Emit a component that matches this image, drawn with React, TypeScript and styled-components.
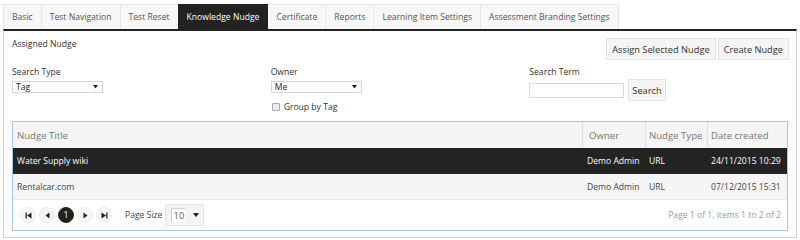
import React from 'react';
import styled, { createGlobalStyle } from 'styled-components';

const Global = createGlobalStyle`
  html, body { margin: 0; padding: 0; background: #fff; }
  body { font-family: "Open Sans", "Noto Sans", sans-serif; color: #333; }
  * { box-sizing: border-box; }
`;

const Page = styled.div`
  width: 800px;
  padding: 4px 3px 0 3px;
`;

const TabBar = styled.div`
  display: flex;
  height: 25px;
`;

const Tab = styled.div<{ $active?: boolean }>`
  display: flex;
  align-items: center;
  padding: 0 8px;
  margin-right: -1px;
  border: 1px solid ${p => (p.$active ? '#222' : '#e6e6e6')};
  border-bottom: none;
  background: ${p => (p.$active ? '#222' : '#f7f7f7')};
  color: ${p => (p.$active ? '#fff' : '#555')};
  font-size: 8.6px;
  white-space: nowrap;
  position: relative;
  z-index: ${p => (p.$active ? 1 : 0)};
`;

const Panel = styled.div`
  border: 1px solid #d0d0d0;
  border-top: 2px solid #222;
  padding: 7px 8px 6px 8px;
`;

const TopRow = styled.div`
  display: flex;
  justify-content: space-between;
  align-items: flex-start;
  height: 22px;
`;

const Heading = styled.div`
  font-size: 8.6px;
  color: #333;
  line-height: 13px;
`;

const ButtonGroup = styled.div`
  display: flex;
  gap: 2px;
  margin-right: -1px;
`;

const Button = styled.button<{ $compact?: boolean }>`
  height: 22px;
  padding: 0 ${p => (p.$compact ? 3 : 5)}px;
  border: 1px solid #e3e3e3;
  background: #f5f5f5;
  color: #333;
  font-family: "Open Sans", "Noto Sans", sans-serif;
  font-size: 9.25px;
  cursor: pointer;
  white-space: nowrap;
`;

const Filters = styled.div`
  display: grid;
  grid-template-columns: repeat(3, 1fr);
  align-items: start;
  margin-top: 6px;
`;

const Field = styled.div`
  display: flex;
  flex-direction: column;
  align-items: flex-start;
`;

const Label = styled.div`
  font-size: 8.6px;
  line-height: 13px;
  color: #333;
`;

const Select = styled.div`
  margin-top: 2px;
  width: 91px;
  height: 12px;
  border: 1px solid #d6d6d6;
  background: #fff;
  display: flex;
  align-items: center;
  justify-content: space-between;
  padding: 0 4px 0 3px;
  font-size: 8.6px;
  color: #222;
`;

const CheckRow = styled.label`
  margin-top: 7px;
  height: 14px;
  display: flex;
  align-items: center;
  gap: 4px;
  font-size: 8.6px;
  color: #333;
`;

const Checkbox = styled.span`
  width: 8px;
  height: 8px;
  border: 1px solid #a8a8a8;
  border-radius: 1px;
  background: #eee;
  margin-left: 1px;
`;

const SearchRow = styled.div`
  display: flex;
  align-items: center;
  gap: 4px;
  height: 22px;
`;

const TextInput = styled.div`
  width: 95px;
  height: 15px;
  border: 1px solid #d8d8d8;
  background: #fff;
`;

const GridBox = styled.div`
  margin-top: 7px;
  border: 1px solid #aac4e6;
`;

const Row = styled.div<{ $variant: 'head' | 'dark' | 'light' }>`
  display: grid;
  grid-template-columns: 569px 63px 62px 80px;
  height: 26px;
  background: ${p => (p.$variant === 'dark' ? '#232323' : '#f5f5f5')};
  color: ${p => (p.$variant === 'dark' ? '#fff' : p.$variant === 'head' ? '#777' : '#444')};
  font-size: ${p => (p.$variant === 'head' ? '9.6px' : '8.6px')};
  border-bottom: ${p => (p.$variant === 'light' ? '1px solid #e8e8e8' : 'none')};
`;

const Cell = styled.div<{ $divider?: boolean; $pad?: number }>`
  display: flex;
  align-items: center;
  padding-left: ${p => p.$pad ?? 4}px;
  white-space: nowrap;
  border-left: ${p => (p.$divider ? '1px solid #e0e0e0' : 'none')};
`;

const Pager = styled.div`
  height: 30px;
  background: #fff;
  display: flex;
  align-items: center;
  padding: 0 6px 0 7px;
`;

const PagerButtons = styled.div`
  display: flex;
  gap: 3px;
`;

const PageBtn = styled.div<{ $active?: boolean }>`
  width: 16px;
  height: 16px;
  border-radius: 50%;
  border: 1px solid ${p => (p.$active ? '#222' : '#ececec')};
  background: ${p => (p.$active ? '#222' : '#f6f6f6')};
  color: #fff;
  font-size: 8.6px;
  display: flex;
  align-items: center;
  justify-content: center;
`;

const PageSizeLabel = styled.div`
  margin-left: 13px;
  font-size: 8.6px;
  color: #444;
`;

const PageSizeBox = styled.div`
  margin-left: 3px;
  width: 39px;
  height: 22px;
  border: 1px solid #e6e6e6;
  background: #f4f4f4;
  display: flex;
  align-items: center;
  padding-left: 5px;
  gap: 8px;
`;

const PageSizeInput = styled.div`
  width: 14px;
  height: 14px;
  background: #fff;
  border-left: 1px solid #cfcfcf;
  border-top: 1px solid #cfcfcf;
  font-size: 9.4px;
  color: #666;
  display: flex;
  align-items: center;
  justify-content: center;
`;

const PageInfo = styled.div`
  margin-left: auto;
  font-size: 8.6px;
  color: #9a9a9a;
`;

const Arrow = ({ size = 5 }: { size?: number }) => (
  <svg width={size} height={size * 0.7} viewBox="0 0 10 7">
    <path d="M0 0 L10 0 L5 7 Z" fill="#222" />
  </svg>
);

type Dir = 'first' | 'prev' | 'next' | 'last';
const PagerIcon = ({ dir }: { dir: Dir }) => (
  <svg width="7" height="7" viewBox="0 0 7 7">
    {dir === 'first' && (
      <>
        <rect x="0.5" y="0.5" width="1.3" height="6" fill="#222" />
        <path d="M6.5 0.5 L2 3.5 L6.5 6.5 Z" fill="#222" />
      </>
    )}
    {dir === 'prev' && <path d="M5.5 0.5 L1.5 3.5 L5.5 6.5 Z" fill="#222" />}
    {dir === 'next' && <path d="M1.5 0.5 L5.5 3.5 L1.5 6.5 Z" fill="#222" />}
    {dir === 'last' && (
      <>
        <path d="M0.5 0.5 L5 3.5 L0.5 6.5 Z" fill="#222" />
        <rect x="5.2" y="0.5" width="1.3" height="6" fill="#222" />
      </>
    )}
  </svg>
);

const tabs = [
  'Basic',
  'Test Navigation',
  'Test Reset',
  'Knowledge Nudge',
  'Certificate',
  'Reports',
  'Learning Item Settings',
  'Assessment Branding Settings',
];

const rows = [
  { title: 'Water Supply wiki', owner: 'Demo Admin', type: 'URL', date: '24/11/2015 10:29', dark: true },
  { title: 'Rentalcar.com', owner: 'Demo Admin', type: 'URL', date: '07/12/2015 15:31', dark: false },
];

export default function App() {
  return (
    <Page>
      <Global />
      <TabBar>
        {tabs.map(t => (
          <Tab key={t} $active={t === 'Knowledge Nudge'}>
            {t}
          </Tab>
        ))}
      </TabBar>
      <Panel>
        <TopRow>
          <Heading>Assigned Nudge</Heading>
          <ButtonGroup>
            <Button>Assign Selected Nudge</Button>
            <Button>Create Nudge</Button>
          </ButtonGroup>
        </TopRow>
        <Filters>
          <Field>
            <Label>Search Type</Label>
            <Select>
              <span>Tag</span>
              <Arrow />
            </Select>
          </Field>
          <Field>
            <Label>Owner</Label>
            <Select>
              <span>Me</span>
              <Arrow />
            </Select>
            <CheckRow>
              <Checkbox />
              Group by Tag
            </CheckRow>
          </Field>
          <Field>
            <Label>Search Term</Label>
            <SearchRow>
              <TextInput />
              <Button $compact>Search</Button>
            </SearchRow>
          </Field>
        </Filters>
        <GridBox>
          <Row $variant="head">
            <Cell $pad={4}>Nudge Title</Cell>
            <Cell $divider $pad={6}>Owner</Cell>
            <Cell $divider $pad={3}>Nudge Type</Cell>
            <Cell $divider $pad={3}>Date created</Cell>
          </Row>
          {rows.map(r => (
            <Row key={r.title} $variant={r.dark ? 'dark' : 'light'}>
              <Cell $pad={4}>{r.title}</Cell>
              <Cell $pad={5}>{r.owner}</Cell>
              <Cell $pad={4}>{r.type}</Cell>
              <Cell $pad={4}>{r.date}</Cell>
            </Row>
          ))}
          <Pager>
            <PagerButtons>
              <PageBtn><PagerIcon dir="first" /></PageBtn>
              <PageBtn><PagerIcon dir="prev" /></PageBtn>
              <PageBtn $active>1</PageBtn>
              <PageBtn><PagerIcon dir="next" /></PageBtn>
              <PageBtn><PagerIcon dir="last" /></PageBtn>
            </PagerButtons>
            <PageSizeLabel>Page Size</PageSizeLabel>
            <PageSizeBox>
              <PageSizeInput>10</PageSizeInput>
              <Arrow size={6} />
            </PageSizeBox>
            <PageInfo>Page 1 of 1, items 1 to 2 of 2</PageInfo>
          </Pager>
        </GridBox>
      </Panel>
    </Page>
  );
}
